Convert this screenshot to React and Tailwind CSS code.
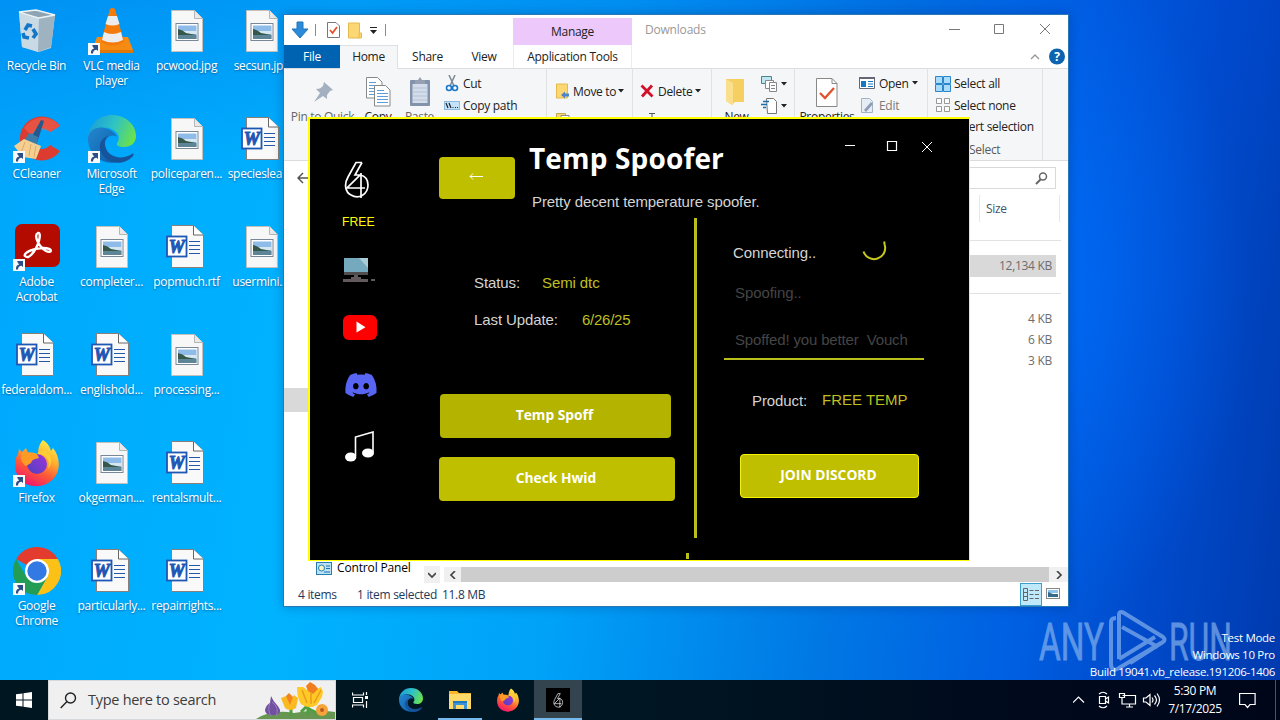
import { FaDiscord } from 'react-icons/fa'

const desktopItems = [
  { icon: RecycleIcon, label: 'Recycle Bin' },
  { icon: CCleanerIcon, label: 'CCleaner', shortcut: true },
  { icon: AcrobatIcon, label: 'Adobe\nAcrobat', shortcut: true },
  { icon: WordIcon, label: 'federaldom...' },
  { icon: FirefoxIcon, label: 'Firefox', shortcut: true },
  { icon: ChromeIcon, label: 'Google\nChrome', shortcut: true },
  { icon: VlcIcon, label: 'VLC media\nplayer', shortcut: true },
  { icon: EdgeIcon, label: 'Microsoft\nEdge', shortcut: true },
  { icon: ImageIcon, label: 'completer...' },
  { icon: WordIcon, label: 'englishold...' },
  { icon: ImageIcon, label: 'okgerman....' },
  { icon: WordIcon, label: 'particularly...' },
  { icon: ImageIcon, label: 'pcwood.jpg' },
  { icon: ImageIcon, label: 'policeparen...' },
  { icon: WordIcon, label: 'popmuch.rtf' },
  { icon: ImageIcon, label: 'processing...' },
  { icon: WordIcon, label: 'rentalsmult...' },
  { icon: WordIcon, label: 'repairrights...' },
  { icon: ImageIcon, label: 'secsun.jpg' },
  { icon: WordIcon, label: 'specieslear...' },
  { icon: ImageIcon, label: 'usermini....' }
]

export default function App() {
  return (
    <main className="relative flex h-[720px] w-[1280px] flex-col overflow-hidden bg-[#00a8fb] font-['Open_Sans',sans-serif] text-[12px] leading-[15px] tracking-[-0.300px]">
      <div className="relative h-[680px] bg-[linear-gradient(98deg,#00a7fc_0%,#00b3ff_26%,#00a2f8_46%,#0078e4_66%,#0060e2_80%,#004bcc_89%,#003aae_100%)]">
        <div className="absolute inset-0 bg-[linear-gradient(180deg,rgba(0,70,215,0.22)_0%,rgba(0,110,255,0)_28%)]" />
        <div className="absolute inset-0 bg-[radial-gradient(ellipse_190px_330px_at_1060px_290px,rgba(0,110,255,0.6),rgba(0,100,255,0))]" />

        <section className="relative -ml-px grid w-[300px] grid-flow-col grid-cols-[repeat(4,75px)] grid-rows-[repeat(6,108px)]">
          {desktopItems.map((item) => (
            <DesktopItem key={item.label} {...item} />
          ))}
        </section>

        <Explorer />
        <Spoofer />
        <Watermark />
      </div>
      <Taskbar />
    </main>
  )
}

function DesktopItem({ icon: Icon, label, shortcut }) {
  return (
    <div className="flex flex-col items-center pt-[7px]">
      <div className="relative h-12 w-12 shrink-0">
        <Icon size={48} />
        {shortcut && (
          <svg className="absolute bottom-0 left-0" width="12" height="12" viewBox="0 0 12 12">
            <rect width="12" height="12" fill="#f7f9fb" />
            <path d="M3 10.500C2.700 7.600 4 5.800 6.200 5.500L4.600 3.400 4.300 2H10v6L8.400 6.800C6.400 7 5.200 8 5 10.500Z" fill="#2b4f86" />
          </svg>
        )}
      </div>
      <p className="mt-[3px] text-center whitespace-pre text-white [text-shadow:0_1px_2px_rgba(0,40,90,0.55)]">
        {label}
      </p>
    </div>
  )
}

/* ---------- Explorer window ---------- */

function Explorer() {
  return (
    <section className="absolute top-[14px] left-[283px] flex h-[593px] w-[786px] flex-col border border-[#2a77b8] bg-white text-[#222] shadow-[0_0_10px_rgba(0,30,90,0.3)]">
      <header className="flex h-[30px] shrink-0 items-start">
        <div className="flex h-[30px] w-[229px] items-center pl-[7px]">
          <svg width="18" height="18" viewBox="0 0 18 18">
            <path d="M6 1h6v7h5L9 17 1 8h5Z" fill="#2b8bd9" stroke="#1f76bd" />
          </svg>
          <i className="ml-[6px] h-3 w-px bg-[#8b8b8b]" />
          <svg className="ml-[11px]" width="13" height="16" viewBox="0 0 13 16">
            <path d="M.5.5h8.500l3.500 3.500v11.500H.5Z" fill="#fff" stroke="#777" />
            <path d="m3 8 2.500 3L10 5" fill="none" stroke="#e0532d" strokeWidth="1.8" />
          </svg>
          <FolderSmall className="ml-[8px]" />
          <svg className="ml-[7px]" width="9" height="8" viewBox="0 0 9 8">
            <path d="M1 1.500h7" stroke="#222" />
            <path d="M1 4h7L4.500 8Z" fill="#222" />
          </svg>
          <i className="ml-[7px] h-3 w-px bg-[#8b8b8b]" />
        </div>
        <div className="mt-[3px] flex h-[27px] w-[119px] items-center justify-center bg-[#ecc8fb]">Manage</div>
        <span className="mt-[7px] ml-[13px] w-[290px] text-[12px] tracking-[-0.200px] text-[#999]">Downloads</span>
        <svg className="mt-[8px] ml-[13px]" width="104" height="13" viewBox="0 0 104 13" fill="none" stroke="#777">
          <path d="M1 6.500h11M46.500 1.500h9v9h-9ZM92 1l10 10M102 1 92 11" />
        </svg>
      </header>

      <nav className="flex h-[24px] shrink-0 items-stretch border-b border-[#dcdddf]">
        <span className="flex w-[56px] items-center justify-center bg-[#0063b1] text-white">File</span>
        <span className="-mb-px flex w-[58px] items-center justify-center border-t border-r border-[#dfe0e2] bg-[#f5f6f7] pb-[2px]">Home</span>
        <span className="flex w-[59px] items-center justify-center">Share</span>
        <span className="flex w-[54px] items-center justify-center">View</span>
        <span className="ml-[2px] flex w-[119px] items-center justify-center border-x border-[#ececec]">Application Tools</span>
        <svg className="mt-[3px] ml-[398px]" width="36" height="17" viewBox="0 0 36 17">
          <path d="m1 11 4-4 4 4" fill="none" stroke="#999" strokeWidth="1.400" />
          <circle cx="27" cy="8.500" r="8" fill="#0c63b0" />
          <text x="27" y="13" textAnchor="middle" fontSize="12" fontWeight="700" fill="#fff">?</text>
        </svg>
      </nav>

      <Ribbon />

      <div className="flex h-[34px] shrink-0 items-center justify-between pr-[12px] pl-[13px]">
        <svg width="13" height="12" viewBox="0 0 13 12" fill="none" stroke="#555" strokeWidth="1.500">
          <path d="M13 6H1.500M6 1 1 6l5 5" />
        </svg>
        <div className="flex h-[22px] w-[300px] items-center justify-end border border-[#d9d9d9] pr-[7px]">
          <svg width="13" height="13" viewBox="0 0 13 13" fill="none" stroke="#666">
            <circle cx="8" cy="4.500" r="3.500" strokeWidth="1.500" />
            <path d="M5.500 7.500 1 12" strokeWidth="2" />
          </svg>
        </div>
      </div>

      <div className="flex min-h-0 flex-1">
        <div className="flex w-[160px] flex-col">
          <div className="mt-[193px] h-[24px] bg-[#d9d9d9]" />
          <div className="mt-auto flex h-[22px] items-start">
            <svg className="mt-[1px] ml-[32px]" width="16" height="13" viewBox="0 0 16 13">
              <rect x=".5" y=".5" width="15" height="12" fill="#b9e2f5" stroke="#2a7bb0" />
              <circle cx="5.500" cy="6" r="3" fill="#f7f3c4" stroke="#2a7bb0" />
              <path d="M10 4h4M10 6.500h4M8 10h6" stroke="#1b6fae" />
            </svg>
            <span className="-mt-px ml-[5px] w-[87px] tracking-[-0.150px] whitespace-nowrap text-black">Control Panel</span>
            <span className="mt-[5px] flex h-[17px] w-[16px] items-center justify-center bg-[#f0f0f0]">
              <Chevron className="rotate-90" />
            </span>
          </div>
        </div>
        <div className="flex flex-1 flex-col items-end">
          <div className="mr-[8px] flex h-[27px] w-[81px] items-center border-x border-[#e3e8ee] pl-[6px] text-[#44546c]">Size</div>
          <div className="mt-[18px] mr-[7px] h-px w-[300px] bg-[#e2e2e2]" />
          <p className="mt-[14px] mr-[12px] h-[22px] w-[300px] bg-[#d9d9d9] pt-[3px] pr-[4px] text-right text-[#6d6d6d]">12,134 KB</p>
          <div className="mt-[16px] mr-[7px] h-px w-[300px] bg-[#e2e2e2]" />
          <div className="mt-[14px] mr-[16px] text-right leading-[21px] text-[#6d6d6d]">
            <p>4 KB</p>
            <p>6 KB</p>
            <p>3 KB</p>
          </div>
          <div className="mt-auto mb-px flex h-[15px] w-[624px] bg-[#f0f0f0]">
            <span className="flex w-[17px] items-center justify-center"><Chevron className="rotate-180" /></span>
            <span className="flex-1 bg-[#cdcdcd]" />
            <span className="flex w-[19px] items-center justify-center"><Chevron /></span>
          </div>
        </div>
      </div>

      <footer className="flex h-[23px] shrink-0 items-center pl-[14px] text-[#1e395b]">
        <span className="w-[59px]">4 items</span>
        <span className="w-[85px] whitespace-nowrap">1 item selected</span>
        <span className="w-[578px]">11.8 MB</span>
        <span className="flex h-[23px] w-[22px] items-center justify-center border border-[#3aa0cf] bg-[#bfe8fb]">
          <svg width="16" height="13" viewBox="0 0 16 13" fill="none" stroke="#666">
            <path d="M.5.5h4v12h-4ZM.5 4.500h4M.5 8.500h4M6.500 2.500h4M12 2.500h4M6.500 6.500h4M12 6.500h4M6.500 10.500h4M12 10.500h4" />
          </svg>
        </span>
        <svg className="-mt-[2px] ml-[4px]" width="14" height="11" viewBox="0 0 14 11">
          <rect x=".5" y=".5" width="13" height="10" fill="#fff" stroke="#888" />
          <path d="M2 2h10v3H2Z" fill="#8cc4ee" />
          <path d="m2 4 5 2h5v3H2Z" fill="#356a8c" />
        </svg>
      </footer>
    </section>
  )
}

function Ribbon() {
  return (
    <div className="flex h-[92px] shrink-0 border-b border-[#dadbdc] bg-[#f5f6f7] whitespace-nowrap">
      <BigButton label="Pin to Quick" className="w-[77px] text-[#666]">
        <svg width="22" height="22" viewBox="0 0 22 22">
          <path d="m12 1 9 8-3 1-3 4 0 4-4-3-9 6 6-9-4-4 4-.5L11 5Z" fill="#a4b0bf" />
        </svg>
      </BigButton>
      <BigButton label="Copy" className="w-[34px]">
        <svg width="26" height="30" viewBox="0 0 26 30">
          <PageLines x={2} y={1} />
          <PageLines x={10} y={9} />
        </svg>
      </BigButton>
      <BigButton label="Paste" className="w-[49px] text-[#666]">
        <svg width="22" height="30" viewBox="0 0 22 30">
          <rect x="1" y="3" width="20" height="26" rx="1" fill="#8392ab" />
          <rect x="3.500" y="7" width="15" height="19" fill="#d3dcea" />
          <path d="M4 11h14M4 15h14M4 19h14M4 23h14" stroke="#b5c1d4" />
          <path d="M6 3h3l2-3 2 3h3v4H6Z" fill="#95a1b3" />
        </svg>
      </BigButton>
      <div className="flex w-[103px] flex-col border-r border-[#e1e2e4] pt-[3px]">
        <SmallButton label="Cut">
          <svg width="14" height="17" viewBox="0 0 14 17" fill="none">
            <path d="M4 0 9 11M10 0 5 11" stroke="#7b8794" strokeWidth="1.500" />
            <circle cx="4" cy="13" r="2.500" stroke="#1978c8" strokeWidth="1.600" />
            <circle cx="10" cy="13" r="2.500" stroke="#1978c8" strokeWidth="1.600" />
          </svg>
        </SmallButton>
        <SmallButton label="Copy path">
          <svg width="16" height="9" viewBox="0 0 16 9">
            <rect x=".5" y=".5" width="15" height="8" fill="#c5e3f8" stroke="#8bbce0" />
            <path d="m2 2 2 5M5 2l2 5M8.500 6.500h1M11 6.500h1M13 6.500h1" stroke="#223" strokeWidth="1.200" />
          </svg>
        </SmallButton>
      </div>
      <div className="flex w-[86px] flex-col border-r border-[#e1e2e4] pt-[11px] pl-[9px]">
        <div className="flex h-[22px] items-center">
          <svg width="14" height="17" viewBox="0 0 14 17">
            <path d="M.5 1h11v14H.5Z" fill="#fbd873" stroke="#e6b94d" />
            <path d="m5 12 4-3.500v2h4v3H9v2Z" fill="#4c86c8" />
          </svg>
          <span className="ml-[3px] w-[45px]">Move to</span>
          <Caret />
        </div>
        <svg className="mt-[11px]" width="14" height="16" viewBox="0 0 14 16">
          <path d="M.5.500h9v12h-9Z" fill="#f5d67c" stroke="#c8a84c" />
          <path d="M5 2.500h8v11H5Z" fill="#fff" stroke="#888" />
        </svg>
      </div>
      <div className="flex w-[79px] flex-col border-r border-[#e1e2e4] pt-[11px] pl-[7px]">
        <div className="flex h-[22px] items-center">
          <svg width="14" height="14" viewBox="0 0 14 14">
            <path d="M1.500 1.500 12.500 12.500M12 1.500 2 12.500" stroke="#d31027" strokeWidth="2.800" />
          </svg>
          <span className="ml-[4px] w-[37px]">Delete</span>
          <Caret />
        </div>
        <svg className="mt-[11px] ml-[9px]" width="7" height="10" viewBox="0 0 7 10"><path d="M0 .5h6M3 0v10" stroke="#555" /></svg>
      </div>
      <div className="flex w-[83px] border-r border-[#e1e2e4]">
        <BigButton label="New" className="w-[49px]">
          <svg className="-ml-[3px]" width="20" height="28" viewBox="0 0 20 28">
            <path d="M1 1h18v23H10L7 27 1 23Z" fill="#f5cf62" />
            <path d="M1 1 8 5v22L1 23Z" fill="#fae08c" />
          </svg>
        </BigButton>
        <div className="flex w-[32px] flex-col pt-[4px]">
          <div className="flex h-[22px] items-center gap-[3px]">
            <svg width="17" height="16" viewBox="0 0 17 16" fill="#fff">
              <path d="M.5.5h10v7H.5Z" fill="#bfe6ee" stroke="#4b8391" />
              <path d="M4.500 4.500h8v8h-8Z" stroke="#888" />
              <path d="M8.500 6.500h7v9h-7ZM10 9.500h4M10 12.500h4" stroke="#888" />
            </svg>
            <Caret />
          </div>
          <div className="flex h-[22px] items-center gap-[3px]">
            <svg width="17" height="16" viewBox="0 0 17 16" fill="none">
              <path d="M5.500.5h7l3 3v12h-9Z" fill="#fff" stroke="#777" />
              <path d="M2 3.500h6M0 6.500h6M2 9.500h3" stroke="#1b6fae" strokeWidth="1.400" />
            </svg>
            <Caret />
          </div>
        </div>
      </div>
      <div className="flex w-[133px] border-r border-[#e1e2e4]">
        <BigButton label="Properties" className="w-[64px]">
          <svg width="22" height="29" viewBox="0 0 22 29">
            <path d="M.5.5H16l5 5v23H.5Z" fill="#fff" stroke="#888" />
            <path d="M16 .5v5h5" fill="none" stroke="#888" />
            <path d="m4 15 5 5 9-10" fill="none" stroke="#e0532d" strokeWidth="2.300" />
          </svg>
        </BigButton>
        <div className="flex flex-col pt-[3px]">
          <div className="flex h-[22px] items-center">
            <svg width="16" height="12" viewBox="0 0 16 12">
              <path d="M.5.5h15v11H.5Z" fill="#fff" stroke="#667" />
              <path d="M0 0h16v2H0Z" fill="#667" />
              <path d="M2 4h5v6H2Z" fill="#1478c7" />
              <path d="M9 4.500h5M9 7h5M9 9.500h5" stroke="#1478c7" />
            </svg>
            <span className="ml-[4px] w-[33px]">Open</span>
            <Caret />
          </div>
          <div className="flex h-[22px] items-center text-[#7b7b7b]">
            <svg width="16" height="15" viewBox="0 0 16 15">
              <path d="M2.500.5h8l3 3v11h-11Z" fill="#e6edf5" stroke="#a5b2c4" />
              <path d="m5 12 7-8 2 2-7 8Z" fill="#8c9db5" />
            </svg>
            <span className="ml-[4px]">Edit</span>
          </div>
        </div>
      </div>
      <div className="flex w-[115px] flex-col border-r border-[#e1e2e4] pt-[4px] pl-[7px]">
        <div className="flex h-[22px] items-center gap-[3px]">
          <svg width="16" height="16" viewBox="0 0 16 16" fill="#a9dcfb" stroke="#2b87c7">
            <path d="M.5.5h7v7h-7ZM8.500.5h7v7h-7ZM.5 8.500h7v7h-7ZM8.500 8.500h7v7h-7Z" />
          </svg>
          Select all
        </div>
        <div className="flex h-[22px] items-center gap-[3px]">
          <svg width="16" height="14" viewBox="0 0 16 14" fill="#fff" stroke="#999">
            <path d="M1.500.5h5v5h-5ZM9.500.5h5v5h-5ZM1.500 8.500h5v5h-5ZM9.500 8.500h5v5h-5Z" />
          </svg>
          Select none
        </div>
        <span className="flex h-[22px] items-center pl-[18px]">Invert selection</span>
        <span className="mt-px flex h-[22px] items-center pl-[34px] text-[#5a5a5a]">Select</span>
      </div>
    </div>
  )
}

function BigButton({ label, className, children }) {
  return (
    <div className={`flex shrink-0 flex-col items-center pt-[7px] ${className}`}>
      <div className="flex h-[32px] items-center">{children}</div>
      <span className="mt-px">{label}</span>
    </div>
  )
}

function SmallButton({ label, children }) {
  return (
    <div className="flex h-[22px] items-center">
      <span className="flex w-[16px] justify-center">{children}</span>
      <span className="ml-[3px]">{label}</span>
    </div>
  )
}

function PageLines({ x, y }) {
  return (
    <g transform={`translate(${x} ${y})`}>
      <path d="M-.5-.5h11l4.500 4.500v16h-15.500Z" fill="#fff" stroke="#888" />
      <path d="M2 4.500h7M2 7.500h11M2 10.500h11M2 13.500h11M2 16.500h11" stroke="#5d9cd8" />
    </g>
  )
}

function FolderSmall({ className = '' }) {
  return (
    <svg className={className} width="14" height="17" viewBox="0 0 14 17">
      <path d="M.5 1h11v10h2v5H.5Z" fill="#fbd873" stroke="#e6b94d" />
      <path d="M11 11v5" stroke="#e6b94d" />
    </svg>
  )
}

function Caret() {
  return <svg width="6" height="4" viewBox="0 0 6 4"><path d="M0 0h6L3 3.500Z" fill="#222" /></svg>
}

function Chevron({ className = '' }) {
  return (
    <svg className={className} width="8" height="8" viewBox="0 0 8 8">
      <path d="m2 0 4 4-4 4" fill="none" stroke="#444" strokeWidth="1.700" />
    </svg>
  )
}

/* ---------- Temp Spoofer window ---------- */

function Spoofer() {
  return (
    <section className="absolute top-[117px] left-[308px] flex h-[444px] w-[662px] border-t-2 border-r border-b border-l-2 border-[#ffff00] bg-black font-['Liberation_Sans',Arial,sans-serif] text-[15px] leading-[18px] tracking-[-0.100px] text-[#d4d4d4]">
      <aside className="flex w-[129px] shrink-0 flex-col pl-[33px]">
        <Logo64 className="mt-[42px] ml-[1px] h-[38px] w-[27px]" />
        <span className="mt-[14px] ml-[-1px] text-[12.200px] tracking-normal text-[#ffff00]">FREE</span>
        <svg className="mt-[27px]" width="34" height="26" viewBox="0 0 34 26">
          <path d="M1 0h24v16H1Z" fill="#75a9bd" />
          <path d="M16 0h9v10Z" fill="#a9ccd5" />
          <path d="M1 14h24v3H1Z" fill="#514d4f" />
          <path d="M11 17h4v2h3v2H8v-2h3ZM0 21h25v3H0ZM28 21h4v2h-4Z" fill="#62595c" />
        </svg>
        <svg className="mt-[30px]" width="34" height="26" viewBox="0 0 34 26">
          <rect y="1" width="34" height="25" rx="6" fill="#ff0000" />
          <path d="m13.500 7.500 9 5.800-9 5.300Z" fill="#fff" />
        </svg>
        <FaDiscord className="mt-[28px] ml-[1px] text-[#5865f2]" size={34} />
        <svg className="mt-[29px] ml-[2px]" width="30" height="31" viewBox="0 0 30 31">
          <path d="M10.500 25V6L28 1v20" fill="none" stroke="#fff" strokeWidth="1.600" />
          <ellipse cx="5.700" cy="26" rx="5.700" ry="4.500" fill="#fff" />
          <ellipse cx="23" cy="22" rx="6" ry="4.500" fill="#fff" />
        </svg>
      </aside>

      <div className="flex flex-1 flex-col">
        <header className="flex h-[99px]">
          <div className="mt-[38px] flex h-[42px] w-[76px] items-center justify-center rounded-[4px] bg-[#bfbf00] pr-[2px] pb-[3px]">
            <svg width="14" height="7" viewBox="0 0 14 7" fill="none" stroke="#fff">
              <path d="M14 3.500H1M4 .5 1 3.500l3 3" />
            </svg>
          </div>
          <div className="ml-[14px] w-[316px] whitespace-nowrap">
            <h1 className="mt-[20px] font-['Open_Sans',sans-serif] text-[28px] leading-[38px] font-bold tracking-[0.150px] text-white">
              Temp Spoofer
            </h1>
            <p className="mt-[16px] ml-[3px]">Pretty decent temperature spoofer.</p>
          </div>
          <svg className="mt-[22px]" width="88" height="12" viewBox="0 0 88 12" fill="none" stroke="#fff">
            <path d="M0 4.500h10" />
            <path d="M42.500.5h9v9h-9Z" strokeWidth="1.200" />
            <path d="m77 1 10 10M87 1 77 11" />
          </svg>
        </header>

        <div className="flex h-[341px]">
          <div className="flex w-[255px] flex-col">
            <p className="mt-[56px] ml-[35px] flex">
              <span className="w-[68px]">Status:</span>
              <span className="text-[#bfbf20]">Semi dtc</span>
            </p>
            <p className="mt-[19px] ml-[35px] flex">
              <span className="w-[108px]">Last Update:</span>
              <span className="tracking-[-0.250px] text-[#bfbf20]">6/26/25</span>
            </p>
            <AppButton className="mt-[65px] ml-px w-[231px] bg-[#b3b300]">Temp Spoff</AppButton>
            <AppButton className="mt-[19px] w-[236px] bg-[#bfbf00]">Check Hwid</AppButton>
            <i className="mt-[52px] ml-[247px] h-[6px] w-[3px] bg-[#b9bf1a]" />
          </div>
          <i className="h-[320px] w-[3px] bg-[#b9bf1a]" />
          <div className="flex flex-1 flex-col">
            <div className="mt-[22px] ml-[36px] flex h-[26px]">
              <span className="mt-[4px] w-[129px]">Connecting..</span>
              <svg className="-mt-px" width="26" height="22" viewBox="0 0 26 22">
                <path d="M1.500 12.500A10.800 10.800 0 0 0 22.600 5.500l-.4-3" fill="none" stroke="#c8c81e" strokeWidth="2" />
              </svg>
            </div>
            <p className="mt-[18px] ml-[38px] text-[#454545]">Spoofing..</p>
            <p className="mt-[29px] ml-[38px] tracking-[-0.150px] whitespace-pre text-[#454545]">Spoffed! you better  Vouch</p>
            <i className="mt-[9px] ml-[27px] h-[2px] w-[200px] bg-[#b9bf1a]" />
            <p className="mt-[31px] ml-[55px] flex">
              <span className="mt-[1px] w-[70px]">Product:</span>
              <span className="tracking-normal text-[#bfbf20]">FREE TEMP</span>
            </p>
            <AppButton className="mt-[44px] ml-[43px] w-[179px] border border-[#f4f400] bg-[#bfbf00]">
              JOIN DISCORD
            </AppButton>
          </div>
        </div>
      </div>
    </section>
  )
}

function AppButton({ className, children }) {
  return (
    <div className={`flex h-[44px] shrink-0 items-center justify-center rounded-[4px] pr-[2px] pb-[2px] font-['Open_Sans',sans-serif] text-[13.800px] font-bold tracking-normal text-white ${className}`}>
      {children}
    </div>
  )
}

function Logo64({ className }) {
  return (
    <svg className={className} viewBox="0 0 27 38" fill="none" stroke="#fff" strokeWidth="1.700">
      <path d="M18 1.500h-6L4 16C0 23 1 31 7 34c8 5 17-1 17-10 0-6-3-9-8-10" />
      <path d="M18 1.500 11 14h5L3 27h18M17 12v25" />
    </svg>
  )
}

/* ---------- Watermark and taskbar ---------- */

function Watermark() {
  return (
    <>
      <svg className="absolute top-[606px] left-[1036px] tracking-normal opacity-65" width="200" height="66" viewBox="0 0 200 66">
        <g fontFamily="Roboto" fontSize="51" fill="#8fb8f0" stroke="#8fb8f0" strokeWidth=".8">
          <text x="3" y="54" textLength="65" lengthAdjust="spacingAndGlyphs">ANY</text>
          <text x="133" y="54" textLength="63" lengthAdjust="spacingAndGlyphs">RUN</text>
        </g>
        <path d="M80 12c-3 0-5 1-5 4v42c0 6 4 7 8 4l42-25M83 53V9c0-3 2-4 5-2l39 24c2 2 2 4 0 5L94 57M86 21l36 20M83 53l36-22" fill="none" stroke="#8fb8f0" strokeWidth="4" strokeLinejoin="round" />
      </svg>
      <div className="absolute right-[5px] bottom-0 text-right text-[11.500px] leading-[17px] text-white">
        <p>Test Mode</p>
        <p>Windows 10 Pro</p>
        <p>Build 19041.vb_release.191206-1406</p>
      </div>
    </>
  )
}

function Taskbar() {
  return (
    <footer className="relative flex h-[40px] items-stretch bg-[linear-gradient(90deg,#001722_0%,#001622_50%,#000a1c_80%,#00061a_100%)] text-white">
      <div className="flex w-[48px] items-center justify-center">
        <svg width="16" height="16" viewBox="0 0 16 16" fill="#fff">
          <path d="M0 2.300 6.500 1.400v6.100H0ZM7.500 1.200 16 0v7.500H7.500ZM0 8.500h6.500v6.100L0 13.700ZM7.500 8.500H16V16l-8.500-1.200Z" />
        </svg>
      </div>
      <div className="flex w-[288px] items-center border border-[#d5d9db] bg-[#f0f0f0] pl-[11px] text-[#3c3c3c]">
        <svg width="17" height="17" viewBox="0 0 17 17" fill="none" stroke="#222" strokeWidth="1.400">
          <circle cx="10.500" cy="6" r="5" />
          <path d="M7 9.500.7 16" />
        </svg>
        <span className="ml-[11px] w-[168px] text-[14.500px] leading-[20px] tracking-[-0.280px] whitespace-nowrap">Type here to search</span>
        <Flowers />
      </div>
      <div className="flex w-[48px] items-center justify-center">
        <svg width="17" height="16" viewBox="0 0 17 16" fill="none" stroke="#fff" strokeWidth="1.200">
          <path d="M.5.5v2.500h11V.5M.5 15.500V13h11v2.500M1.500 5.500h9v5h-9ZM14.500 0v3M14.500 9v7" />
          <path d="M13 4h3v3h-3Z" fill="#fff" stroke="none" />
        </svg>
      </div>
      <div className="flex w-[54px] items-center justify-center"><EdgeIcon size={24} /></div>
      <div className="flex w-[44px] items-center justify-center border-b-2 border-[#76b9ed] pt-[1px]">
        <svg width="22" height="20" viewBox="0 0 22 20">
          <path d="M0 1h8l2 2h12v16H0Z" fill="#f8b82a" />
          <path d="M0 4h22v15H0Z" fill="#ffd96a" />
          <path d="M4 19v-7q0-1 1-1h12q1 0 1 1v7h-3v-4H7v4Z" fill="#3b94d6" />
          <path d="M4 12h14" stroke="#1d79c2" strokeWidth="2" />
        </svg>
      </div>
      <div className="flex w-[52px] items-center justify-center"><FirefoxIcon size={24} /></div>
      <div className="flex w-[48px] items-center justify-center border-b-2 border-[#76b9ed] bg-[#33444e] pt-[2px]">
        <span className="flex h-6 w-6 items-center justify-center bg-black"><Logo64 className="h-[15px] w-[11px]" /></span>
      </div>
      <div className="ml-auto flex items-center">
        <svg width="88" height="20" viewBox="0 0 88 20" fill="none" stroke="#fff" strokeWidth="1.200">
          <path d="m0 12.500 5.500-5.500L11 12.500" />
          <path d="M26.500 6.500h6v7h-6ZM32.500 9l3-2v6l-3-2M26 4q4-3.500 8 0M26 16q4 3.500 8 0" />
          <path d="M49.500 5.500h13v8.500h-13M56.500 14.500v3M53 17h7M46.500 3.500h5v4h-5ZM49 7.500v7" />
          <path d="M70.500 8h2.500l4-3.500v11L73 12h-2.500ZM79 7.500q2 2.500 0 5M81.500 5.500q4 4.500 0 9M84 3.500q5 6.500 0 13" />
        </svg>
        <div className="ml-[5px] w-[58px] text-center leading-[18px] tracking-[-0.350px] whitespace-nowrap">
          <p>5:30 PM</p>
          <p>7/17/2025</p>
        </div>
        <svg className="ml-[15px]" width="17" height="18" viewBox="0 0 17 18" fill="none" stroke="#fff" strokeWidth="1.200">
          <path d="M.6 2.500h15.500v11H11L8.500 16.500 6 13.500H.6Z" />
        </svg>
        <i className="mr-[4px] ml-[19px] h-[40px] w-px bg-[#4b5565]" />
      </div>
    </footer>
  )
}

function Flowers() {
  return (
    <svg className="ml-auto self-end" width="79" height="38" viewBox="0 0 79 38">
      <path d="M0 38Q16 28 38 32q22-4 41-1v7Z" fill="#66964f" />
      <path d="M52 34V22M35 35V25M45 31l7-7M59 31l-6-3" stroke="#4da03b" strokeWidth="3" fill="none" />
      <path d="M41 6l6 0 4 3 4-6 4 6 6-3 2 5-1 5-5 8q-9 5-16-1-4-6-4-17Z" fill="#ffc928" />
      <path d="M50 5 54 1l5 3 3 4-5 5-5-3Z" fill="#f07d1e" />
      <path d="m46 9 5 13M65 9l-7 13M55 11v12" fill="none" stroke="#ec9c19" strokeWidth="1.500" />
      <path d="m25 17 5-2 4 5 4-6 4 3-2 10q-6 4-11 0Z" fill="#fbb922" />
      <path d="m30 15 3-3 4 4-3 8Z" fill="#f3841d" />
      <path d="M15 15q2 5 6 9 7 8-2 10-10 1-10-5 1-5 5-7Z" fill="#70509f" />
      <path d="M16 21q8 6 4 14M14 22q-3 7 1 13" fill="none" stroke="#9b7bc4" />
      <circle cx="66" cy="29" r="6" fill="#f6a33a" />
      <circle cx="66" cy="29" r="2" fill="#ba5821" />
    </svg>
  )
}

/* ---------- Desktop icons ---------- */

function RecycleIcon({ size }) {
  return (
    <svg width={size} height={size} viewBox="0 0 48 48">
      <path d="M6 5 23 3l19 5-4 33-12 4-17-5Z" fill="#bfd1dc" />
      <path d="m6 5 20 6-1 34-16-5Z" fill="#c9dae5" />
      <path d="m42 8-16 3-1 34 13-5Z" fill="#9fb2bf" />
      <path d="m6 5 17-2 19 5-16 3Z" fill="#8fa4b2" stroke="#eef5f8" strokeWidth="1.300" />
      <g fill="none" stroke="#1277c8" strokeWidth="3.600">
        <path d="m12 23 3-5 4 1M20 22l3 5-3 4M16 31l-5-1-1-4" />
      </g>
    </svg>
  )
}

function CCleanerIcon({ size }) {
  return (
    <svg width={size} height={size} viewBox="0 0 48 48">
      <path d="M47 11A22 22 0 1 0 47 36l-10-6a10.500 10.500 0 1 1 0-13Z" fill="#dc3b2f" />
      <path d="M47 11A22 22 0 0 0 11 13l7 7q8-9 19-3Z" fill="#ee6251" opacity=".6" />
      <path d="m28 5 3 1-7 22-7-3Z" fill="#25588c" />
      <path d="m16 18 9 4-1 9-13-5Z" fill="#3c7cab" />
      <path d="m11 24 17 7-5 13-13-2L1 31Z" fill="#f5cf92" />
      <path d="m12 27-4 11M18 29l-2 12M23 31l-2 11" stroke="#dfa960" />
    </svg>
  )
}

function AcrobatIcon({ size }) {
  return (
    <svg width={size} height={size} viewBox="0 0 48 48">
      <rect x="2" y="1" width="45" height="43" rx="7" fill="#b30b00" />
      <path d="M12 33c-2-3 8-8 18-8 11 0 9 6 3 3-7-4-13-16-8-18 4-1 1 14-7 22-2 2-4 3-6 1Z" fill="none" stroke="#fff" strokeWidth="2.400" />
    </svg>
  )
}

function VlcIcon({ size }) {
  return (
    <svg width={size} height={size} viewBox="0 0 48 48">
      <path d="m9 30 31 0 5 13H4Z" fill="#f58b12" />
      <path d="M4 43h41v3H4Z" fill="#e07806" />
      <path d="M22 2q2-2 5 0l9 33q-12 7-23 0Z" fill="#f47b0a" />
      <path d="m20 9 9 0 2.500 8q-7 3-14 0ZM16 25q8 4 17 0l2 8q-10 5-21 0Z" fill="#ececec" />
    </svg>
  )
}

function EdgeIcon({ size }) {
  return (
    <svg width={size} height={size} viewBox="0 0 48 48">
      <defs>
        <linearGradient id="edgeTop" x1="0" y1=".3" x2="1" y2=".6">
          <stop offset="0" stopColor="#1b9fd8" />
          <stop offset=".5" stopColor="#2fc3c4" />
          <stop offset="1" stopColor="#6be24a" />
        </linearGradient>
        <linearGradient id="edgeLeft" x1="0" y1="0" x2="1" y2="1">
          <stop offset="0" stopColor="#2388cf" />
          <stop offset="1" stopColor="#0d5aa8" />
        </linearGradient>
      </defs>
      <path d="M0 23C1 9 11 0 24 0c14 0 24 10 24 21 0 7-5 11-12 11-6 0-8-2-7-4 3-4 2-8-1-11C19 9 4 12 0 23Z" fill="url(#edgeTop)" />
      <path d="M0 24c0-8 8-13 16-11 7 1 11 5 13 9-5-4-12 0-12 7 0 8 5 15 13 18C13 51 0 38 0 24Z" fill="url(#edgeLeft)" />
      <path d="M20 21c-5 4-4 13 2 18 7 5 15 4 22 0 2-1 2 0 1 2-5 6-13 8-20 6C9 42 8 25 20 21Z" fill="#15549b" />
    </svg>
  )
}

function FirefoxIcon({ size }) {
  return (
    <svg width={size} height={size} viewBox="0 0 48 48">
      <defs>
        <linearGradient id="foxBody" x1=".8" y1="0" x2=".3" y2="1">
          <stop offset="0" stopColor="#fff44f" />
          <stop offset=".35" stopColor="#ffb02c" />
          <stop offset=".65" stopColor="#ff5a36" />
          <stop offset="1" stopColor="#f0146f" />
        </linearGradient>
        <linearGradient id="foxGlobe" x1="1" y1="0" x2="0" y2="1">
          <stop offset="0" stopColor="#9b35e0" />
          <stop offset="1" stopColor="#5140bd" />
        </linearGradient>
      </defs>
      <path d="M30 1c5 3 7 7 8 11l2-3c7 8 8 22 1 30-9 11-27 11-35 0C1 32 1 20 5 15l1-5 3 3 4-4 2 5c5-1 8 0 10 2 0-6 1-11 5-15Z" fill="url(#foxBody)" />
      <circle cx="24" cy="25" r="10" fill="url(#foxGlobe)" />
      <path d="M9 13c7 0 10 1 15 2l2 4c-5 1-7 2-8 5l-5 3c-5-3-6-8-4-14Z" fill="#ff9b25" />
      <path d="M24 15c9-1 14 6 11 15 5-6 4-13-1-17-3-2-7-2-10 2Z" fill="#ffcd36" />
    </svg>
  )
}

function ChromeIcon({ size }) {
  return (
    <svg width={size} height={size} viewBox="0 0 48 48">
      <path d="M24 24 3.200 12A24 24 0 0 1 44.800 12Z" fill="#e33b2e" />
      <path d="M24 12h20.800A24 24 0 0 1 24 48L34 30Z" fill="#fbc116" />
      <path d="M3.200 12A24 24 0 0 0 24 48l10.400-18L24 34 13.600 30Z" fill="#239d55" />
      <circle cx="24" cy="24" r="12" fill="#fff" />
      <circle cx="24" cy="24" r="9.700" fill="#3379e4" />
    </svg>
  )
}

function WordIcon({ size }) {
  return (
    <svg width={size} height={size} viewBox="0 0 48 48">
      <path d="M8.500 2.500h22l10 9.500v32.500h-32Z" fill="#f9f9f9" stroke="#8a7f78" />
      <path d="M30.500 2.500V12h10" fill="#fff" stroke="#666" />
      <path d="M26 18.500h11M26 22.500h11M26 26.500h11M26 30.500h11" stroke="#2458a8" />
      <rect x="4" y="13.500" width="19.500" height="20" fill="#fff" stroke="#1f57b5" strokeWidth="1.800" />
      <text x="13.500" y="29.500" textAnchor="middle" fontFamily="Liberation Serif" fontSize="18" fontWeight="700" fontStyle="italic" fill="#1f57b5" stroke="#1f57b5" strokeWidth="1">W</text>
    </svg>
  )
}

function ImageIcon({ size }) {
  return (
    <svg width={size} height={size} viewBox="0 0 48 48">
      <path d="M8.500 3.500h23l8 8v33h-31Z" fill="#f7f7f7" stroke="#c4c0bc" />
      <path d="M31.500 3.500v8h8" fill="#e9e9e9" stroke="#b5b5b5" />
      <rect x="13" y="16.500" width="22" height="17" fill="#fff" stroke="#7a8794" />
      <path d="M15 18.500h18.500V32H15Z" fill="#8fbbe8" />
      <path d="M15 24h18.500v3H15Z" fill="#d5e7f1" />
      <path d="M15 22q5 1 8 4l10.500 2H15Z" fill="#35584a" />
      <path d="M15 28h18.500v4H15Z" fill="#5d8596" />
    </svg>
  )
}
